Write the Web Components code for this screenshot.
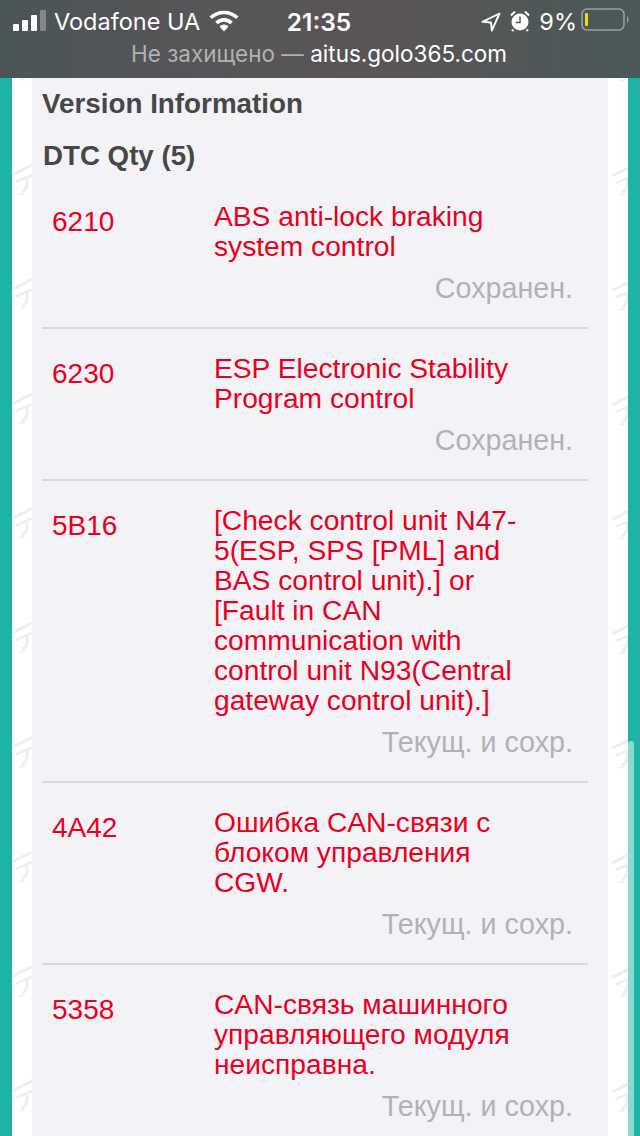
<!DOCTYPE html>
<html><head><meta charset="utf-8"><title>DTC</title>
<style>html,body{margin:0;padding:0;height:1136px;overflow:hidden;background:#fff;font-family:"Liberation Sans",Arial,sans-serif}</style>
</head><body>
<template id="t-status"><style>
:host{display:block;height:78px;background:linear-gradient(90deg,#4a5557 0%,#555557 25%,#5a5556 60%,#4a5858 100%);color:#fff;font-family:"Inter","Liberation Sans",sans-serif}
.top{height:43px;display:flex;align-items:center;padding:0 0 0 13px;box-sizing:border-box;font-size:23.5px;white-space:nowrap}
.sig{display:flex;align-items:flex-end;gap:3px;width:33px;height:21px;margin-right:8px;margin-top:-3px}
.sig i{display:block;width:6px;background:#fff;border-radius:1px}
.car{width:156px;font-weight:400}
.time{width:66px;font-weight:600;font-size:24.500px;text-align:center;margin-left:47px}
.url{height:35px;line-height:21px;text-align:center;font-size:22.500px;color:#fff;padding-right:2px}
.url span{color:#b0b2b2}
.r{margin-left:auto;display:flex;align-items:center;padding-right:9px}
.pct{font-size:23.500px;margin:0 4px 0 0}
</style>
<div class="top"><div class="sig"><i style="height:7px"></i><i style="height:11px"></i><i style="height:16px"></i><i style="height:21px;opacity:.3"></i></div><span class="car">Vodafone UA</span>
<svg width="30" height="22" viewBox="0 0 30 22" style="margin-top:-2px;margin-left:-1px"><path d="M15 21.500l-4.600-5a6.500 6.500 0 0 1 9.200 0z" fill="#fff"/><path d="M7.500 13a10.500 10.500 0 0 1 15 0M1.800 7.800a19 19 0 0 1 26.400 0" fill="none" stroke="#fff" stroke-width="3.600"/></svg>
<span class="time">21:35</span>
<div class="r">
<svg width="20" height="20" viewBox="0 0 20 20" style="margin-right:9px"><path d="M18.500 1.500 1.500 9.800 10 10.500 10.800 18.500z" fill="none" stroke="#fff" stroke-width="1.900" stroke-linejoin="round"/></svg>
<svg width="20" height="22" viewBox="0 0 20 22" style="margin-right:9px;margin-top:-2px"><circle cx="10" cy="12" r="8.500" fill="#fff"/><path d="M10 6.500V12.600H5.600" fill="none" stroke="#555" stroke-width="1.500"/><path d="M1 5.500 5 1.500M15 1.500 19 5.500M3.500 19.500 2 21M16.500 19.500 18 21" stroke="#fff" stroke-width="2.200"/></svg>
<span class="pct">9%</span>
<svg width="50" height="24" viewBox="0 0 50 24" style="margin-top:-4px"><rect x="1" y="1" width="42" height="21" rx="5" fill="none" stroke="#9b9d9d" stroke-width="1.600"/><rect x="4" y="5" width="3" height="13" rx="1" fill="#ffd60a"/><path d="M46 8c2 .8 2 6.200 0 7z" fill="#9b9d9d"/></svg>
</div></div>
<div class="url"><span>Не захищено —</span> aitus.golo365.com</div>
</template>

<template id="t-row"><style>
:host{display:block;margin:0 20px 0 10px;border-bottom:2px solid #d9d9dd;padding:0 0 24px;font-size:28.200px;color:#e8001c}
.g{display:grid;grid-template-columns:162px 1fr;padding-left:10px}
.c{padding-top:30px;line-height:30px;font-size:28px}
.d{padding-top:24px;line-height:30px;padding-right:60px}
.s{color:#b2b2b4;text-align:right;line-height:30px;margin-top:12px;padding-right:15px;font-size:28.700px}
</style><div class="g"><div class="c"><slot name="code"></slot></div><div class="d"><slot name="text"></slot></div></div><div class="s"><slot name="state"></slot></div>
</template>

<template id="t-page"><style>
:host{display:block;height:1058px;position:relative;overflow:hidden;background:#1eb3a4}
.sheet{position:relative;margin:0 12px;height:1058px;background:#fff;overflow:hidden}
.wm{position:absolute;left:0;top:0}
.panel{position:relative;margin:0 20px;height:1058px;background:#f2f2f7;box-sizing:border-box;overflow:hidden;color:#474747}
h2{margin:0;font-size:27.800px;line-height:32px;padding:10px 0 0 10px;font-weight:700}
h3{margin:0 0 5px;font-size:27.700px;line-height:32px;padding:20px 0 0 11px;font-weight:700}
.bar{position:absolute;left:628px;top:663px;width:6px;height:395px;background:#8bdad2;border-radius:3px 3px 0 0}
</style>
<div class="sheet"><svg class="wm" width="616" height="1058" viewBox="0 0 616 1058"><defs><g id="w" fill="none" stroke="#efefef"><path d="M0 12 20 2" stroke-width="3"/><path d="M4 19 20 12" stroke-width="2.500"/><path d="M15 15C16 22 14 27 10 29" stroke-width="3"/><path d="M7 31H13" stroke-width="1.500"/></g></defs>
<g id="l"></g></svg>
<div class="panel"><h2>Version Information</h2><h3>DTC Qty (5)</h3><slot></slot></div></div><div class="bar"></div>
</template>

<status-bar></status-bar>
<report-page>
<dtc-row><span slot="code">6210</span><span slot="text">ABS anti-lock braking system control</span><span slot="state">Сохранен.</span></dtc-row>
<dtc-row><span slot="code">6230</span><span slot="text">ESP Electronic Stability Program control</span><span slot="state">Сохранен.</span></dtc-row>
<dtc-row><span slot="code">5B16</span><span slot="text">[Check control unit N47-5(ESP, SPS [PML] and BAS control unit).] or [Fault in CAN communication with control unit N93(Central gateway control unit).]</span><span slot="state">Текущ. и сохр.</span></dtc-row>
<dtc-row><span slot="code">4A42</span><span slot="text">Ошибка CAN-связи с блоком управления CGW.</span><span slot="state">Текущ. и сохр.</span></dtc-row>
<dtc-row><span slot="code">5358</span><span slot="text">CAN-связь машинного управляющего модуля неисправна.</span><span slot="state">Текущ. и сохр.</span></dtc-row>
</report-page>
<script>
for(const [n,id] of [['status-bar','t-status'],['dtc-row','t-row'],['report-page','t-page']]){
customElements.define(n,class extends HTMLElement{constructor(){super();const r=this.attachShadow({mode:'open'});r.appendChild(document.getElementById(id).content.cloneNode(true));
const l=r.getElementById('l');if(l){let s='';for(let k=-1;k<10;k++){const y=85+114.5*k;s+=`<use href="#w" x="0" y="${y}"/><use href="#w" x="600" y="${y+1}"/>`;}l.innerHTML=s;}
}});
}
</script>
</body></html>
